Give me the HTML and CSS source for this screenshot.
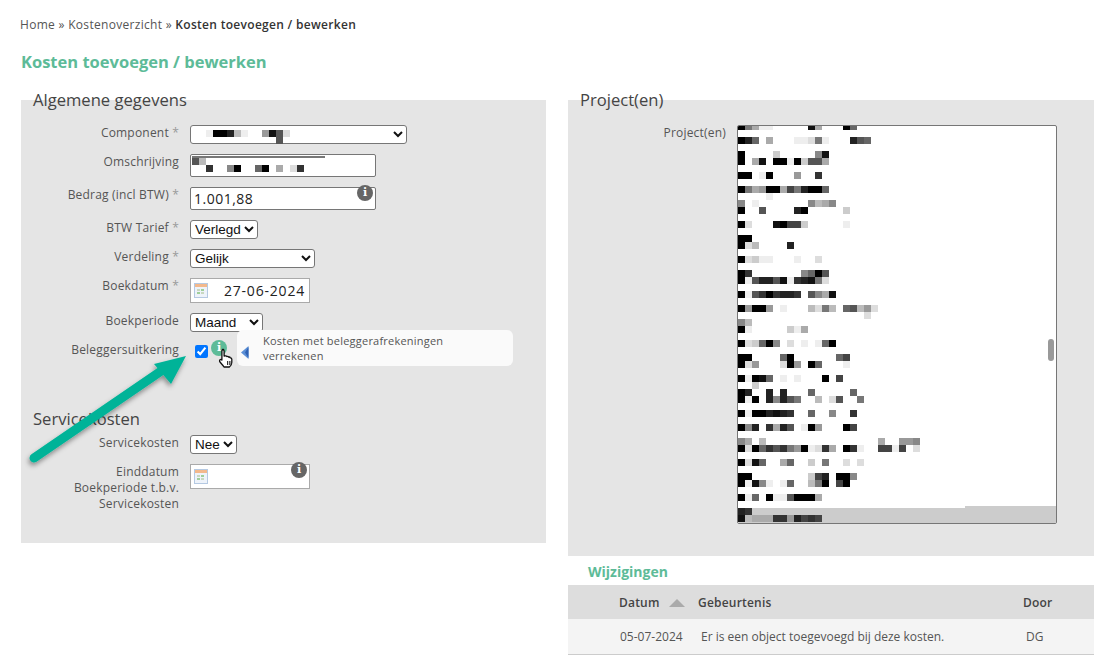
FILE: index.html
```html
<!DOCTYPE html>
<html lang="nl">
<head>
<meta charset="UTF-8" />
<title>Kosten toevoegen / bewerken</title>
<link rel="stylesheet" href="styles.css">
</head>
<body>
<nav class="breadcrumb">Home &raquo; Kostenoverzicht &raquo; <b>Kosten toevoegen / bewerken</b></nav>
<h1 class="page-title">Kosten toevoegen / bewerken</h1>

<div class="columns">
  <div class="column">
    <fieldset class="panel panel-left">
      <legend>Algemene gegevens</legend>

      <div class="form-row">
        <label class="form-label">Component <span class="req">*</span></label>
        <div class="control">
          <select class="select select-component"><option></option></select>
          <svg class="mosaic" id="mosaic-component" width="100" height="20"></svg>
        </div>
      </div>

      <div class="form-row">
        <label class="form-label">Omschrijving</label>
        <div class="control">
          <input type="text" class="input input-desc" />
          <svg class="mosaic" id="mosaic-desc" width="140" height="22"></svg>
        </div>
      </div>

      <div class="form-row">
        <label class="form-label">Bedrag (incl BTW) <span class="req">*</span></label>
        <div class="control">
          <input type="text" class="input input-amount" value="1.001,88" />
          <span class="info-dot info-amount">i</span>
        </div>
      </div>

      <div class="form-row">
        <label class="form-label">BTW Tarief <span class="req">*</span></label>
        <div class="control"><select class="select select-btw"><option>Verlegd</option></select></div>
      </div>

      <div class="form-row">
        <label class="form-label">Verdeling <span class="req">*</span></label>
        <div class="control"><select class="select select-verdeling"><option>Gelijk</option></select></div>
      </div>

      <div class="form-row">
        <label class="form-label">Boekdatum <span class="req">*</span></label>
        <div class="control">
          <input type="text" class="input input-date" value="27-06-2024" />
          <svg class="cal-icon" width="14" height="15" viewBox="0 0 14 15">
            <rect x="0.5" y="0.5" width="13" height="14" fill="#eef3fa" stroke="#b5c9e2" />
            <rect x="1" y="1" width="12" height="3" fill="#f3b98c" />
            <rect x="3" y="6" width="3" height="2" fill="#c9d8c0" />
            <rect x="7" y="6" width="3" height="2" fill="#9fcf9a" />
            <rect x="3" y="9" width="3" height="2" fill="#9fcf9a" />
            <rect x="7" y="9" width="3" height="2" fill="#c9d8c0" />
          </svg>
        </div>
      </div>

      <div class="form-row">
        <label class="form-label">Boekperiode</label>
        <div class="control"><select class="select select-period"><option>Maand</option></select></div>
      </div>

      <div class="form-row form-row-check">
        <label class="form-label">Beleggersuitkering</label>
        <div class="control">
          <input type="checkbox" class="check" checked />
          <span class="info-dot info-green">i</span>
          <svg class="hand" width="16" height="20" viewBox="0 0 16 20">
            <path d="M4.5 1.5c1 0 1.6.7 1.6 1.6v5l1.2-.3c.8-.1 1.3.2 1.5.7.8-.3 1.5 0 1.8.6.8-.2 1.5.1 1.8.8.8 0 1.4.5 1.4 1.4v3c0 2-1 3.7-2.4 4.7H6c-.8-1.3-2.2-3-3.8-4.800-.8-.9-.8-1.900-.2-2.400.6-.5 1.400-.3 1.900.2V3.100c0-.9.600-1.600 1.600-1.600z" fill="#fff" stroke="#111" stroke-width="1.300" stroke-linejoin="round" />
            <path d="M9.500 13v4M11.300 13v4M13 13v4" stroke="#333" stroke-width="1" />
          </svg>
          <div class="tooltip">
            <svg class="tooltip-arrow" width="8" height="13" viewBox="0 0 8 13"><path d="M7.500 0v13L0 6.500z" fill="#5b8fd6" /><path d="M7.500 1v11L4 6.500z" fill="#2f62b4" /></svg>
            <span>Kosten met beleggerafrekeningen verrekenen</span>
          </div>
        </div>
      </div>

      <h2 class="sub-legend">Servicekosten</h2>

      <div class="form-row">
        <label class="form-label">Servicekosten</label>
        <div class="control"><select class="select select-yesno"><option>Nee</option></select></div>
      </div>

      <div class="form-row">
        <label class="form-label">Einddatum<br>Boekperiode t.b.v.<br>Servicekosten</label>
        <div class="control">
          <input type="text" class="input input-date" />
          <svg class="cal-icon" width="14" height="15" viewBox="0 0 14 15">
            <rect x="0.5" y="0.5" width="13" height="14" fill="#eef3fa" stroke="#b5c9e2" />
            <rect x="1" y="1" width="12" height="3" fill="#f3b98c" />
            <rect x="3" y="6" width="3" height="2" fill="#c9d8c0" />
            <rect x="7" y="6" width="3" height="2" fill="#9fcf9a" />
            <rect x="3" y="9" width="3" height="2" fill="#9fcf9a" />
            <rect x="7" y="9" width="3" height="2" fill="#c9d8c0" />
          </svg>
          <span class="info-dot info-end">i</span>
        </div>
      </div>

      <!-- annotation arrow from the screenshot -->
      <svg class="arrow" width="180" height="130" viewBox="0 0 180 130">
        <defs><filter id="arrow-shadow" x="-20%" y="-20%" width="140%" height="140%"><feDropShadow dx="-1" dy="3" stdDeviation="2.500" flood-color="#000" flood-opacity="0.4" /></filter></defs>
        <g filter="url(#arrow-shadow)">
          <path d="M13 112L146 21" stroke="#00b398" stroke-width="9" stroke-linecap="round" />
          <path d="M165 10L133 18L150 38z" fill="#00b398" />
        </g>
      </svg>
    </fieldset>
  </div>

  <div class="column">
    <fieldset class="panel panel-right">
      <legend>Project(en)</legend>
      <div class="form-row">
        <label class="form-label">Project(en)</label>
        <div class="project-list">
          <svg id="mosaic-projects" width="318" height="397"></svg>
        </div>
      </div>
    </fieldset>

    <h2 class="section-title">Wijzigingen</h2>
    <table class="changes">
      <thead>
        <tr>
          <th class="col-date">Datum <span class="sort-up"></span></th>
          <th class="col-event">Gebeurtenis</th>
          <th class="col-by">Door</th>
        </tr>
      </thead>
      <tbody>
        <tr>
          <td class="col-date">05-07-2024</td>
          <td class="col-event">Er is een object toegevoegd bij deze kosten.</td>
          <td class="col-by">DG</td>
        </tr>
      </tbody>
    </table>
  </div>
</div>

<script src="mosaic.js"></script>
</body>
</html>
```

FILE: styles.css
```css
* {
  box-sizing: border-box;
}

body {
  margin: 0;
  padding: 17px 11px 0 20px;
  font-family: "Open Sans", sans-serif;
  font-size: 12px;
  color: #555;
  background: #fff;
}

.breadcrumb {
  height: 16px;
  line-height: 16px;
  color: #555;
  letter-spacing: 0.3px;
}

.breadcrumb b {
  font-weight: 600;
  color: #333;
}

.page-title {
  margin: 19px 0 0 1px;
  font-size: 16.5px;
  line-height: 20px;
  font-weight: 700;
  color: #5dbb98;
}

.columns {
  display: flex;
  gap: 22px;
  margin: 17px 0 0 1px;
}

.column {
  width: 525px;
}

.column:last-child {
  width: 526px;
}

/* Fieldsets */
.panel {
  position: relative;
  margin: 0;
  padding: 14px 0 0;
  border: none;
  background: #e5e5e5;
}

.panel legend {
  margin-left: 12px;
  padding: 0;
  font-size: 16.6px;
  line-height: 22px;
  color: #444;
}

.panel-left {
  height: 454px;
}

.panel-right {
  height: 467px;
}

.sub-legend {
  margin: 50px 0 0 12px;
  font-size: 16.6px;
  line-height: 22px;
  font-weight: 400;
  color: #444;
  height: 27px;
}

/* Form rows */
.form-row {
  display: flex;
  gap: 11px;
  margin-bottom: 10px;
}

.form-row-check {
  margin-bottom: 0;
}

.form-label {
  width: 158px;
  flex-shrink: 0;
  text-align: right;
  line-height: 16px;
  letter-spacing: 0.2px;
  color: #555;
}

.req {
  color: #999;
}

.control {
  position: relative;
}

.select {
  display: block;
  height: 19px;
  font-family: "Liberation Sans", sans-serif;
  font-size: 13.5px;
  color: #111;
  background: #fff;
  border: 1px solid #767676;
  border-radius: 3px;
  padding: 0;
}

.select-component {
  width: 217px;
}

.select-verdeling {
  width: 125px;
}

.select-btw {
  width: 68px;
}

.select-period {
  width: 73px;
}

.select-yesno {
  width: 47px;
}

.input {
  display: block;
  font-family: "Open Sans", sans-serif;
  font-size: 14px;
  color: #222;
  background: #fff;
  border: 1px solid #767676;
  border-radius: 2px;
  outline: none;
}

.input-desc {
  width: 186px;
  height: 23px;
}

.input-amount {
  width: 186px;
  height: 23px;
  padding: 0 3px;
  letter-spacing: 0.5px;
}

.input-date {
  width: 120px;
  height: 25px;
  border: 1px solid #aaa;
  border-radius: 0;
  text-align: right;
  padding: 0 4px 0 0;
  letter-spacing: 0.8px;
}

.cal-icon {
  position: absolute;
  left: 4px;
  top: 5px;
}

.mosaic {
  position: absolute;
  left: 0;
  top: 0;
  pointer-events: none;
}

/* Info bullets */
.info-dot {
  position: absolute;
  width: 16px;
  height: 16px;
  border-radius: 50%;
  background: #666;
  color: #fff;
  font-family: "DejaVu Serif", serif;
  font-weight: 700;
  font-size: 11px;
  line-height: 16px;
  text-align: center;
}

.info-amount {
  left: 167px;
  top: -2px;
}

.info-end {
  left: 101px;
  top: -2px;
}

.info-green {
  left: 21px;
  top: -2px;
  background: #5dbb98;
}

.check {
  display: block;
  width: 13px;
  height: 13px;
  margin: 3px 0 0 5px;
}

.hand {
  position: absolute;
  left: 28px;
  top: 6px;
}

.tooltip {
  position: absolute;
  left: 47px;
  top: -12px;
  width: 276px;
  height: 36px;
  padding: 3px 40px 0 26px;
  background: #fafafa;
  border-radius: 6px;
  font-size: 11px;
  line-height: 15px;
  letter-spacing: 0.22px;
  color: #555;
}

.tooltip-arrow {
  position: absolute;
  left: 4px;
  top: 16px;
}

.arrow {
  position: absolute;
  left: 0;
  top: 235px;
  pointer-events: none;
}

/* Project list */
.project-list {
  position: relative;
  width: 320px;
  height: 399px;
  background: #fff;
  border: 1px solid #767676;
  border-radius: 2px;
  overflow: hidden;
}

.project-list svg {
  display: block;
}

/* Wijzigingen */
.section-title {
  margin: 7px 0 0 20px;
  font-size: 14px;
  line-height: 18px;
  font-weight: 700;
  color: #5dbb98;
}

.changes {
  width: 526px;
  margin-top: 4px;
  border-collapse: collapse;
}

.changes th {
  height: 34px;
  background: #ddd;
  font-weight: 600;
  text-align: left;
  color: #444;
  letter-spacing: 0.2px;
}

.changes td {
  height: 35px;
  background: #f4f4f4;
  border-bottom: 1px solid #ccc;
}

.changes .col-date {
  width: 130px;
  padding-left: 51px;
}

.changes td.col-date {
  padding-left: 52px;
}

.changes .col-event {
  padding-left: 0;
}

.changes td.col-event {
  padding-left: 3px;
}

.changes .col-by {
  width: 71px;
  padding-left: 0;
}

.changes td.col-by {
  padding-left: 3px;
}

.sort-up {
  display: inline-block;
  width: 0;
  height: 0;
  margin-left: 6px;
  border-left: 8px solid transparent;
  border-right: 8px solid transparent;
  border-bottom: 8px solid #aaa;
}
```

FILE: mosaic.js
```js
// Paints the blurred-out customer names as blocks of grey.
// Each row: [row index, "cells"], one hex digit per cell (0 = black, f = almost white), "." = empty.
const CELL = 7;
const SVG_NS = 'http://www.w3.org/2000/svg';

function addRect(svg, x, y, w, h, fill) {
  const rect = document.createElementNS(SVG_NS, 'rect');
  rect.setAttribute('x', x);
  rect.setAttribute('y', y);
  rect.setAttribute('width', w);
  rect.setAttribute('height', h);
  rect.setAttribute('fill', fill);
  svg.appendChild(rect);
}

function paint(svg, rows, offsetX, offsetY) {
  rows.forEach(([row, cells]) => {
    cells.split('').forEach((c, i) => {
      if (c === '.') return;
      addRect(svg, offsetX + i * CELL, offsetY + row * CELL, CELL, CELL, '#' + c + c + c);
    });
  });
}

const component = document.getElementById('mosaic-component');
paint(component, [
  [0, 'e002bef.915d'],
  [1, '..........5.']
], 16, 5);

const desc = document.getElementById('mosaic-desc');
addRect(desc, 2, 2, 133, 2, '#777');
paint(desc, [
  [0, '5b.f'],
  [1, '..3f.80.f60.a.d3']
], 2, 4);

const projects = document.getElementById('mosaic-projects');
addRect(projects, 0, 382, 318, 15, '#ccc');
addRect(projects, 227, 380, 91, 17, '#ccc');
paint(projects, [
  [0, '07aee.....1a..f06'],
  [2, '026fa...eed7e.f.256'],
  [4, '0..f.c.....81'],
  [5, '0fa1.00e0c55a'],
  [7, '00fe0...9..3'],
  [9, '07a900a472006'],
  [10, '....e.......f'],
  [11, '8fe.......8ba8'],
  [12, '0..5....20.f...cf'],
  [14, '0d...1044cf...fe'],
  [16, '00'],
  [17, '0dbf...2f'],
  [19, '0dcee.f.e..d'],
  [21, '03.ff....8605'],
  [22, '0e52251e3217df'],
  [24, '0e5303223.58a1.f'],
  [26, '09009.e...bd7b.65b9df'],
  [27, '....f.............d'],
  [28, '8b'],
  [29, '0e..f..cea'],
  [31, '0dc608.dfefe60'],
  [33, '00....60......64'],
  [34, '0d9...d09f06...e'],
  [36, '0e016fe.e..f0.4'],
  [37, '..c'],
  [38, '02..2.2...6.....6'],
  [39, '0e0f28257.fb.d5..7'],
  [41, '0e002123.f6..8..3'],
  [43, '082.3a25fe09.f.04'],
  [45, '8a.b......f.........a..998'],
  [46, '0d06353790ed3a.03e..44e4.d'],
  [48, '0d16f.a6.fc.7..d.d'],
  [50, '00........c42.008'],
  [51, '0e18e.e6..b70.40f'],
  [53, '0e6.0ee5000a'],
  [55, '23'],
  [56, '1baaa3392434']
], 0, -3);

// scrollbar thumb
const thumb = document.createElementNS(SVG_NS, 'rect');
thumb.setAttribute('x', 310);
thumb.setAttribute('y', 213);
thumb.setAttribute('width', 6);
thumb.setAttribute('height', 22);
thumb.setAttribute('rx', 3);
thumb.setAttribute('fill', '#999');
projects.appendChild(thumb);
```
